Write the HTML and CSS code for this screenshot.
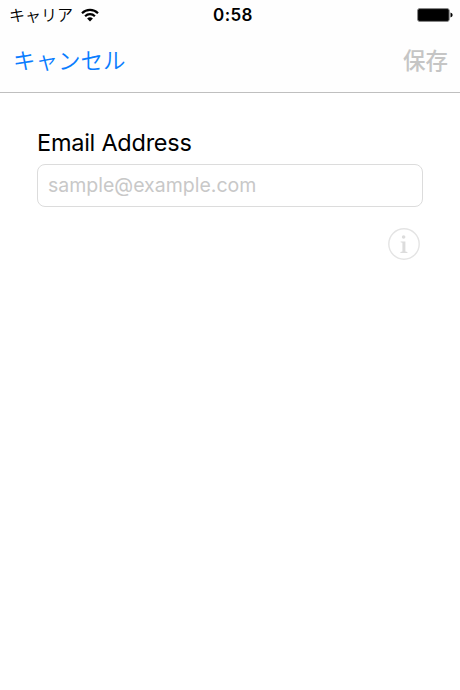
FILE: index.html
```html
<!DOCTYPE html>
<html lang="ja">
<head>
  <meta charset="UTF-8">
  <meta name="viewport" content="width=device-width, initial-scale=1.0">
  <title>Email Address</title>
  <link rel="stylesheet" href="styles.css">
</head>
<body>
  <header>
    <div class="status-bar">
      <div class="carrier">
        <span>キャリア</span>
        <svg class="wifi" viewBox="0 0 18 14" width="18" height="14">
          <path d="M1 5.2a11.3 11.3 0 0 1 16 0M4.1 8.2a7 7 0 0 1 9.8 0" fill="none" stroke="#000" stroke-width="2.2"/>
          <path d="M9 13.4l-2.9-2.8a4.2 4.2 0 0 1 5.8 0z"/>
        </svg>
      </div>
      <span class="time">0:58</span>
      <svg class="battery" viewBox="0 0 36 14" width="36" height="14">
        <rect x=".6" y=".6" width="31.6" height="12.8" rx="2" fill="#000" stroke="#888" stroke-width="1"/>
        <path d="M33.5 4.5q2.2.6 2.2 2.5t-2.2 2.5z"/>
      </svg>
    </div>
    <nav class="nav-bar">
      <button class="cancel">キャンセル</button>
      <button class="save" disabled>保存</button>
    </nav>
  </header>

  <main class="form">
    <label for="email">Email Address</label>
    <input type="email" id="email" placeholder="sample@example.com">
    <button class="info" aria-label="Info">
      <svg viewBox="0 0 32 32" width="32" height="32">
        <circle cx="16" cy="16" r="15.2" fill="none" stroke="#e4e4e4" stroke-width="1.4"/>
        <circle cx="15.6" cy="9" r="1.8" fill="#dcdcdc"/>
        <path d="M12.6 13.4h4.8v10l2 .6v.9h-7v-.9l2-.6v-8.6l-1.8-.5z" fill="#dcdcdc"/>
      </svg>
    </button>
  </main>
</body>
</html>
```

FILE: styles.css
```css
* {
  box-sizing: border-box;
}

body {
  margin: 0;
  background: #fff;
  color: #000;
  font-family: Inter, "Noto Sans CJK JP", sans-serif;
}

button {
  padding: 0;
  border: none;
  background: none;
  font-family: inherit;
}

svg {
  display: block;
}

header {
  height: 93px;
  background: #fefefe;
  border-bottom: 1px solid #bfbfbf;
}

.status-bar {
  display: grid;
  grid-template-columns: 1fr auto 1fr;
  align-items: center;
  height: 30px;
  padding: 0 7px 0 9px;
}

.carrier {
  display: flex;
  align-items: center;
  gap: 8px;
  font-size: 16px;
  font-weight: 350;
  line-height: 30px;
}

.time {
  padding-left: 4px;
  font-size: 17px;
  font-weight: 600;
  letter-spacing: 0.4px;
}

.battery {
  justify-self: end;
}

/* Navigation */
.nav-bar {
  display: flex;
  justify-content: space-between;
  align-items: center;
  height: 62px;
  padding: 0 12px 0 13px;
}

.nav-bar button {
  font-size: 22.5px;
  line-height: 32px;
}

.nav-bar .cancel {
  color: #087cff;
  font-weight: 350;
}

.nav-bar .save {
  color: #c5c5c5;
  font-weight: 500;
}

/* Form */
.form {
  display: flex;
  flex-direction: column;
  padding: 35px 37px 0;
}

.form label {
  font-size: 23.5px;
  letter-spacing: -0.25px;
  line-height: 30px;
}

.form input {
  height: 43px;
  margin-top: 6px;
  padding: 0 10px 2px;
  border: 1px solid #dcdcdc;
  border-radius: 8px;
  background: #fff;
  font-family: inherit;
  font-size: 19.5px;
}

.form input::placeholder {
  color: #c8c8c8;
}

.info {
  align-self: flex-end;
  margin: 21px 3px 0 0;
}
```
